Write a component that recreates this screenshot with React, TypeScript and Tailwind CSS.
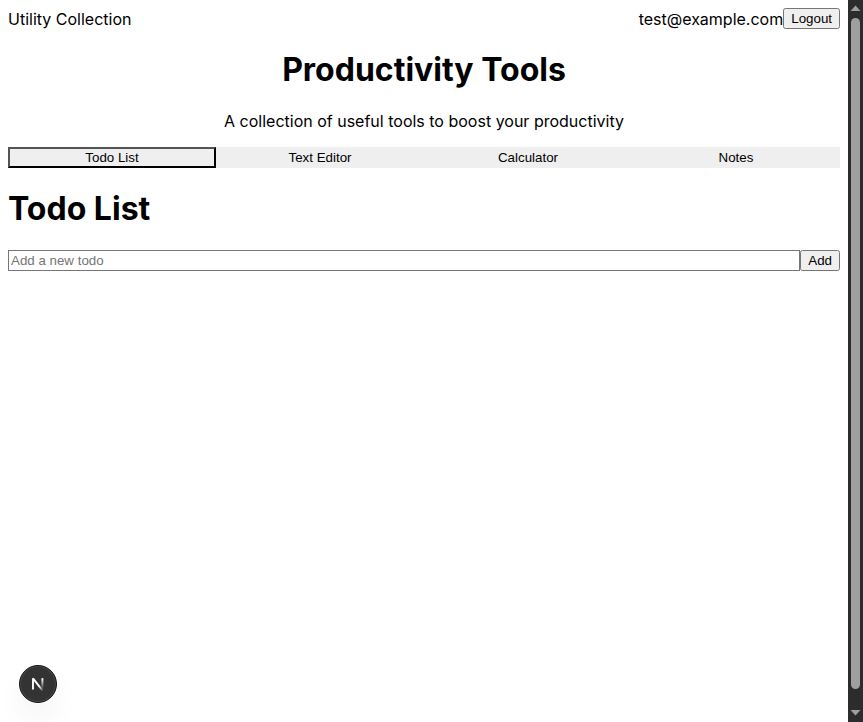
const tabs = ["Text Editor", "Calculator", "Notes"];

export default function App() {
  return (
    <div className="flex h-[722px] w-[863px] overflow-hidden bg-white font-['Inter',sans-serif] text-[16px] leading-[19px] text-black">
      <main className="relative w-[848px] overflow-hidden px-2">
        <nav className="mt-2 flex h-[21px] items-center justify-between">
          <span className="pt-0.5">Utility Collection</span>
          <div className="flex items-center">
            <span className="pt-0.5">test@example.com</span>
            <button className="h-[21px] rounded-[2.5px] border border-[#767676] bg-[#efefef] px-[7px] font-['Liberation_Sans',sans-serif] text-[13.333px] leading-[15px]">Logout</button>
          </div>
        </nav>
        <h1 className="mt-[21px] text-center text-[32px] leading-[39px] font-bold">Productivity Tools</h1>
        <p className="mt-[23px] text-center">A collection of useful tools to boost your productivity</p>
        <div className="mt-4 grid h-[21px] grid-cols-4 bg-[#efefef] font-['Liberation_Sans',sans-serif] text-[13.333px] leading-[15px]">
          <button className="border-2 border-black [border-style:outset]">Todo List</button>
          {tabs.map((t) => <button key={t}>{t}</button>)}
        </div>
        <h1 className="mt-[21px] text-[32px] leading-[39px] font-bold">Todo List</h1>
        <form className="mt-[22px] flex h-[21px] font-['Liberation_Sans',sans-serif] text-[13.333px] leading-[15px]">
          <input placeholder="Add a new todo" className="min-w-0 flex-1 border border-[#767676] px-[2px] placeholder:text-[#757575]" />
          <button type="button" className="rounded-[2.5px] border border-[#767676] bg-[#efefef] px-[7px]">Add</button>
        </form>
        <div className="absolute top-[665px] left-[19px] flex size-[38px] items-center justify-center rounded-full border border-[#171717] bg-[#333] shadow-[inset_0_0_0_1px_#484848,0_16px_32px_-8px_rgba(0,0,0,0.14)]">
          <svg width="14" height="14" viewBox="0 0 14 14" fill="none" strokeWidth="1.9">
            <defs>
              <linearGradient id="diagonal" gradientUnits="userSpaceOnUse" x1="8.5" y1="9" x2="12.5" y2="14">
                <stop stopColor="white" />
                <stop offset="1" stopColor="white" stopOpacity="0" />
              </linearGradient>
              <linearGradient id="stem" gradientUnits="userSpaceOnUse" x1="11" y1="2" x2="11" y2="12">
                <stop stopColor="white" />
                <stop offset="1" stopColor="white" stopOpacity="0" />
              </linearGradient>
            </defs>
            <path d="M2 12.6V1.2" stroke="white" />
            <path d="M2 1.4L11.4 13.4" stroke="url(#diagonal)" />
            <path d="M11.4 1.2V12" stroke="url(#stem)" />
          </svg>
        </div>
      </main>
      <aside className="flex w-[15px] flex-col items-center bg-[#2c2c2c]">
        <svg width="15" height="18" viewBox="0 0 15 18"><path d="M2.5 11L7.5 5.5L12.5 11Z" fill="#9f9f9f" /></svg>
        <div className="h-[671px] w-[9px] rounded-full bg-[#9f9f9f]" />
        <svg className="mt-auto" width="15" height="17" viewBox="0 0 15 17"><path d="M2.5 5L7.5 10.5L12.5 5Z" fill="#9f9f9f" /></svg>
      </aside>
    </div>
  );
}
